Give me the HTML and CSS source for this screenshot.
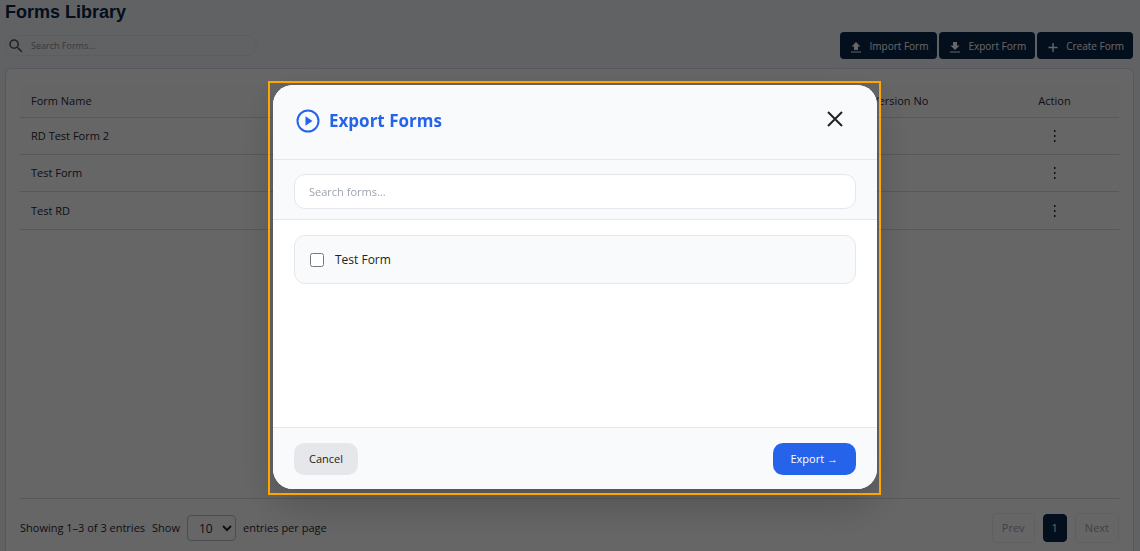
FILE: index.html
```html
<!DOCTYPE html>
<html lang="en">
<head>
<meta charset="utf-8">
<title>Forms Library</title>
<link rel="stylesheet" href="styles.css">
</head>
<body>
<main class="page">
  <h1 class="page-title">Forms Library</h1>
  <div class="toolbar">
    <label class="search">
      <svg class="search-icon" viewBox="0 0 24 24" aria-hidden="true"><path d="M15.5 14h-.79l-.28-.27A6.47 6.47 0 0 0 16 9.5 6.5 6.5 0 1 0 9.5 16c1.61 0 3.09-.59 4.23-1.57l.27.28v.79l5 4.99L20.49 19l-4.99-5zm-6 0C7.01 14 5 11.99 5 9.5S7.01 5 9.5 5 14 7.01 14 9.5 11.99 14 9.5 14z"/></svg>
      <input class="search-input" type="text" placeholder="Search Forms..." aria-label="Search Forms">
    </label>
    <div class="actions">
      <button class="btn-navy" type="button"><svg class="btn-icon" viewBox="0 0 12 12" aria-hidden="true"><path d="M6 1l4.500 4.500H8V9H4V5.500H1.500zM1 10.500h10v1H1z"/></svg>Import Form</button>
      <button class="btn-navy" type="button"><svg class="btn-icon" viewBox="0 0 12 12" aria-hidden="true"><path d="M4 1h4v3.500h2.500L6 9 1.500 4.500H4zM1 10.500h10v1H1z"/></svg>Export Form</button>
      <button class="btn-navy" type="button"><svg class="btn-icon" viewBox="0 0 12 12" aria-hidden="true"><path d="M5.300 2h1.400v3.800h3.800v1.400H6.700V11H5.300V7.200H1.500V5.800h3.800z"/></svg>Create Form</button>
    </div>
  </div>
  <section class="card">
    <div class="table-area">
      <table class="forms-table">
        <thead>
          <tr><th class="col-name">Form Name</th><th class="col-version">Version No</th><th class="col-action">Action</th></tr>
        </thead>
        <tbody>
          <tr><td>RD Test Form 2</td><td>1</td><td class="col-action"><button class="kebab" type="button" aria-label="Row actions"><svg viewBox="0 0 4 14" width="4" height="14"><path d="M1 1h1.500v2H1zM1 6h1.500v2H1zM1 11h1.500v2H1z"/></svg></button></td></tr>
          <tr><td>Test Form</td><td>1</td><td class="col-action"><button class="kebab" type="button" aria-label="Row actions"><svg viewBox="0 0 4 14" width="4" height="14"><path d="M1 1h1.500v2H1zM1 6h1.500v2H1zM1 11h1.500v2H1z"/></svg></button></td></tr>
          <tr><td>Test RD</td><td>1</td><td class="col-action"><button class="kebab" type="button" aria-label="Row actions"><svg viewBox="0 0 4 14" width="4" height="14"><path d="M1 1h1.500v2H1zM1 6h1.500v2H1zM1 11h1.500v2H1z"/></svg></button></td></tr>
        </tbody>
      </table>
    </div>
    <div class="table-footer">
      <div class="entries">
        <span>Showing 1–3 of 3 entries</span>
        <label for="per-page">Show</label>
        <select id="per-page" class="per-page"><option>10</option><option>25</option></select>
        <span>entries per page</span>
      </div>
      <nav class="pager">
        <button class="page-btn" type="button" disabled>Prev</button>
        <button class="page-btn current" type="button">1</button>
        <button class="page-btn" type="button" disabled>Next</button>
      </nav>
    </div>
  </section>
</main>

<div class="overlay">
  <div class="modal-wrap">
    <div class="modal" role="dialog" aria-labelledby="modal-title">
      <header class="modal-header">
        <svg class="modal-icon" viewBox="0 0 24 24" aria-hidden="true"><circle cx="12" cy="12" r="10.500" fill="none" stroke="currentColor" stroke-width="2"/><path d="M9.500 7.200v9.600l7-4.800z" fill="currentColor"/></svg>
        <h2 class="modal-title" id="modal-title">Export Forms</h2>
        <button class="close" type="button" aria-label="Close"><svg viewBox="0 0 16 16" width="16" height="16"><path d="M1 1l14 14M15 1L1 15" fill="none" stroke="currentColor" stroke-width="2"/></svg></button>
      </header>
      <div class="modal-search">
        <input class="modal-input" type="text" placeholder="Search forms..." aria-label="Search forms">
      </div>
      <div class="modal-body">
        <label class="form-item"><input class="check" type="checkbox">Test Form</label>
      </div>
      <footer class="modal-footer">
        <button class="btn-cancel" type="button">Cancel</button>
        <button class="btn-export" type="button">Export →</button>
      </footer>
    </div>
    <div class="highlight"></div>
  </div>
</div>
</body>
</html>
```
FILE: styles.css
```css
* { box-sizing: border-box; }
body {
  margin: 0;
  height: 100vh;
  overflow: hidden;
  background: #f3f5f9;
  color: #1f2937;
  font: 11px/18px "Open Sans", "Noto Sans", sans-serif;
}
button, input, select { font: inherit; color: inherit; margin: 0; }
.page {
  height: 100vh;
  padding: 0 6px 0 5px;
  display: flex;
  flex-direction: column;
}
.page-title {
  margin: 0;
  color: #082649;
  font: bold 18px/24px "Liberation Sans", Arial, sans-serif;
}
.toolbar {
  display: flex;
  justify-content: space-between;
  align-items: flex-start;
  height: 44px;
  padding-top: 8px;
}
.search {
  display: flex;
  align-items: center;
  gap: 6px;
  width: 252px;
  height: 21px;
  margin-top: 3px;
  padding-left: 1px;
  border: 1px solid #e6e8ec;
  border-radius: 11px;
}
.search-icon { width: 18px; height: 18px; fill: #4b5563; }
.search-input {
  flex: 1;
  min-width: 0;
  padding: 0;
  border: 0;
  background: none;
  font-size: 9px;
  line-height: 16px;
}
.search-input::placeholder { color: #8a8f98; opacity: 1; }
.actions { display: flex; gap: 2px; padding-right: 1px; }
.btn-navy {
  display: flex;
  align-items: center;
  gap: 7px;
  height: 27px;
  padding: 0 9px 0 10px;
  border: 0;
  border-radius: 4px;
  background: #082649;
  color: #fff;
  font-size: 10px;
  line-height: 16px;
}
.btn-icon { width: 12px; height: 12px; fill: currentColor; margin-top: 3px; }
.card {
  flex: 1;
  display: flex;
  flex-direction: column;
  padding: 15px 14px 8px;
  background: #fff;
  border: 1px solid #d9dde3;
  border-bottom: 0;
  border-radius: 6px 6px 0 0;
}
.table-area { flex: 1; border-bottom: 1px solid #d9dde3; }
.forms-table { width: 100%; border-collapse: separate; border-spacing: 0; table-layout: fixed; }
.forms-table th, .forms-table td {
  height: 37px;
  padding: 0 11px;
  border-bottom: 1px solid #dcdcdc;
  text-align: left;
  font-weight: 500;
}
.forms-table th { height: 34px; background: #fcfcfd; }
.forms-table tr:last-child td { height: 38px; }
.forms-table .col-version { width: 129px; }
.forms-table .col-action { width: 129px; text-align: center; }
.kebab { padding: 0; border: 0; background: none; width: 20px; height: 20px; vertical-align: middle; }
.kebab svg { display: block; margin: 0 auto; fill: currentColor; }
.table-footer {
  display: flex;
  justify-content: space-between;
  align-items: flex-start;
  padding-top: 14px;
}
.entries { display: flex; align-items: center; gap: 7px; height: 30px; color: #1f2937; }
.per-page {
  width: 49px;
  height: 26px;
  padding: 0 0 0 7px;
  border: 1px solid #b9bec6;
  border-radius: 4px;
  background: #fff;
  font-size: 12px;
}
.pager { display: flex; align-items: center; gap: 8px; height: 30px; }
.page-btn {
  height: 30px;
  padding: 0 9px;
  border: 1px solid #f0f1f3;
  border-radius: 4px;
  background: #fff;
  color: #9ca3af;
}
.page-btn.current { height: 28px; padding: 0 8px; background: #082649; border-color: #082649; color: #fff; }
.overlay {
  position: fixed;
  inset: 0;
  display: flex;
  align-items: center;
  justify-content: center;
  padding: 23px 0 0 10px;
  background: rgba(0, 0, 0, 0.6);
}
.modal-wrap { position: relative; width: 604px; max-width: 92%; }
.highlight { position: absolute; inset: -4px -4px -6px -5px; border: 2px solid #ffa500; pointer-events: none; }
.modal {
  display: flex;
  flex-direction: column;
  overflow: hidden;
  border-radius: 20px;
  background: #fff;
  box-shadow: 0 16px 40px rgba(0, 0, 0, 0.2);
}
.modal-header {
  display: flex;
  align-items: center;
  gap: 9px;
  height: 75px;
  padding: 0 34px 2px 23px;
  background: #f9fafc;
  border-bottom: 1px solid #e5e7eb;
}
.modal-icon { width: 24px; height: 24px; color: #2563eb; }
.modal-title { flex: 1; margin: 0; color: #2563eb; font-size: 17px; line-height: 24px; font-weight: 700; }
.close { padding: 0 0 4px; border: 0; background: none; line-height: 0; color: #222; }
.modal-search { padding: 14px 21px 10px; background: #f9fafc; border-bottom: 1px solid #e5e7eb; }
.modal-input {
  display: block;
  width: 100%;
  height: 35px;
  padding: 0 14px;
  border: 1px solid #e5e7eb;
  border-radius: 11px;
  background: #fff;
}
.modal-input::placeholder { color: #9ca3af; opacity: 1; }
.modal-body { min-height: 207px; padding: 15px 21px; }
.form-item {
  display: flex;
  align-items: center;
  gap: 11px;
  height: 49px;
  padding: 0 15px;
  border: 1px solid #e5e7eb;
  border-radius: 11px;
  background: #f9fafc;
  color: #222;
  font-size: 12px;
  font-weight: 500;
}
.check { width: 14px; height: 14px; }
.modal-footer {
  display: flex;
  justify-content: space-between;
  padding: 15px 21px 14px;
  background: #f9fafc;
  border-top: 1px solid #e5e7eb;
}
.btn-cancel, .btn-export { height: 32px; border: 0; border-radius: 10px; }
.btn-cancel { padding: 0 15px; background: #e5e7eb; color: #222; }
.btn-export { padding: 0 18px; background: #2563eb; color: #fff; }
```
